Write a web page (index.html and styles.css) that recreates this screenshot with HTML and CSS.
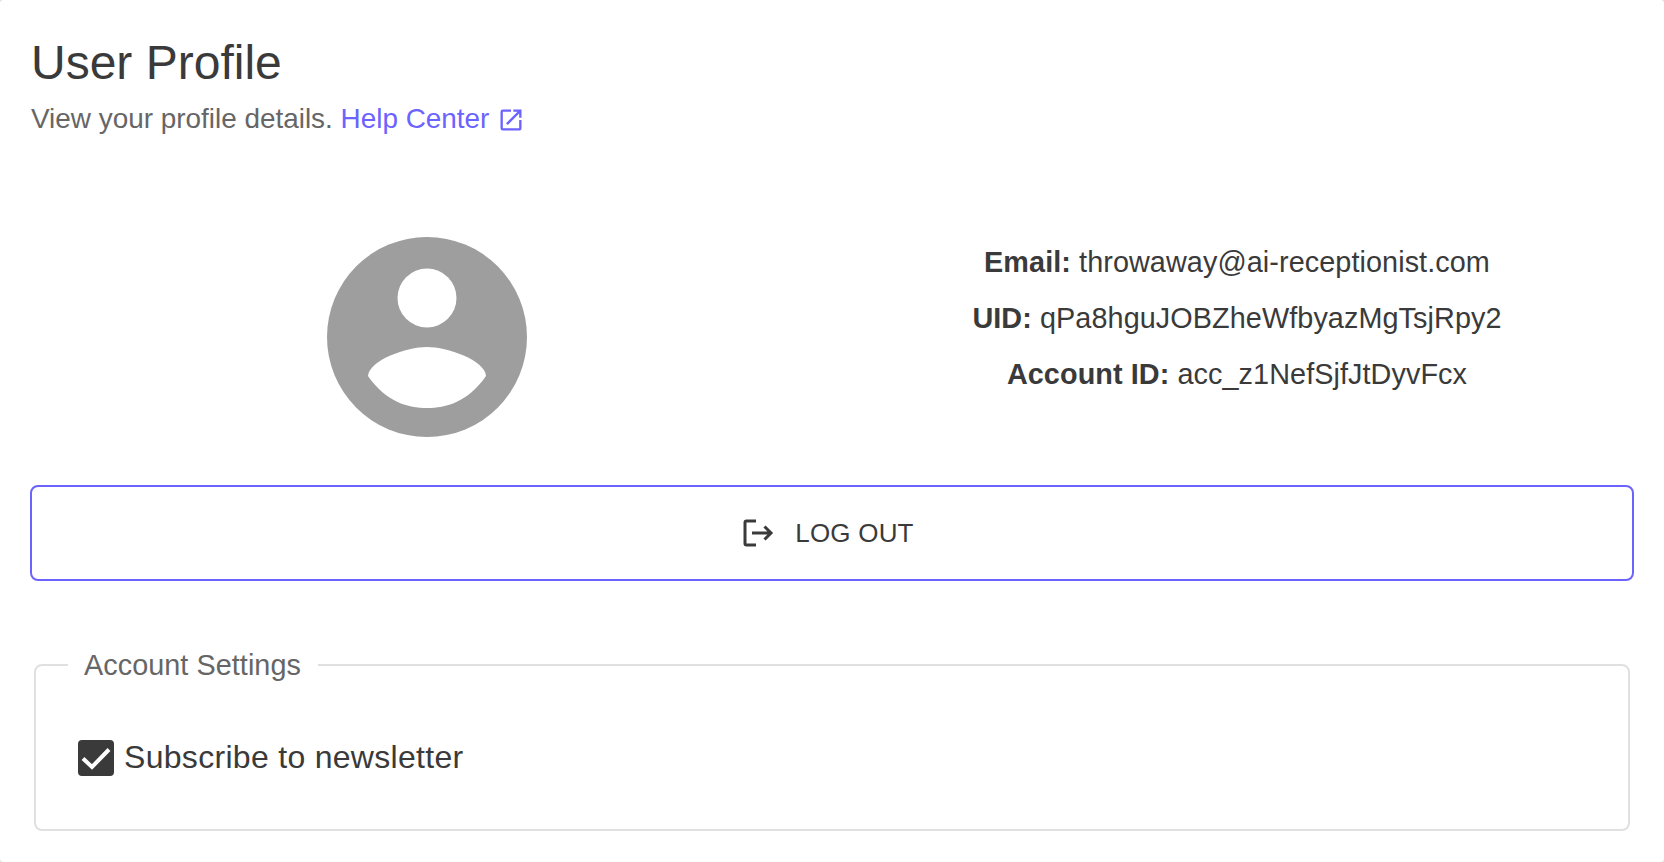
FILE: index.html
```html
<!DOCTYPE html>
<html lang="en">
<head>
    <meta charset="UTF-8">
    <meta name="viewport" content="width=device-width, initial-scale=1.0">
    <title>User Profile</title>
    <link rel="stylesheet" href="styles.css">
</head>
<body>
    <div class="container">
        <h1>User Profile</h1>
        <p class="subtitle">
            View your profile details.
            <a href="#" class="help-link">Help Center
                <svg class="external-icon" viewBox="0 0 24 24"><path d="M19 19H5V5h7V3H5a2 2 0 0 0-2 2v14a2 2 0 0 0 2 2h14c1.1 0 2-.9 2-2v-7h-2v7zM14 3v2h3.59l-9.83 9.83 1.41 1.41L19 6.41V10h2V3h-7z"/></svg>
            </a>
        </p>

        <div class="profile">
            <div class="avatar-col">
                <svg class="avatar" viewBox="0 0 200 200">
                    <circle cx="100" cy="100" r="100" fill="#9e9e9e"/>
                    <circle cx="100" cy="61" r="29.5" fill="#fff"/>
                    <path d="M100 110c-20 0-58 13-59 29 18 26 40 32 59 32s41-6 59-32c-1-16-39-29-59-29z" fill="#fff"/>
                </svg>
            </div>
            <div class="details">
                <p><strong>Email:</strong> throwaway@ai-receptionist.com</p>
                <p><strong>UID:</strong> qPa8hguJOBZheWfbyazMgTsjRpy2</p>
                <p><strong>Account ID:</strong> acc_z1NefSjfJtDyvFcx</p>
            </div>
        </div>

        <button class="logout">
            <svg class="logout-icon" viewBox="0 0 30 30"><path d="M13 3H3.500A1.500 1.500 0 0 0 2 4.500v21A1.500 1.500 0 0 0 3.500 27H13M9 15h19M21.500 8.500 28 15l-6.500 6.500" fill="none" stroke="currentColor" stroke-width="3"/></svg>
            LOG OUT
        </button>

        <fieldset class="settings">
            <legend>Account Settings</legend>
            <label class="check-row">
                <span class="checkbox">
                    <svg viewBox="0 0 36 36"><path d="M5 18.500 14 27 31 9.500" fill="none" stroke="#fff" stroke-width="4"/></svg>
                </span>
                Subscribe to newsletter
            </label>
        </fieldset>
    </div>
</body>
</html>
```

FILE: styles.css
```css
* {
    box-sizing: border-box;
}

body {
    margin: 0;
    font-family: 'Liberation Sans', Arial, sans-serif;
    background: #e4e4e4;
    color: #3a3a3a;
}

.container {
    padding: 35px 30px 0;
    height: 862px;
    overflow: hidden;
    background: #fff;
    border-radius: 4px;
}

h1 {
    margin: 0 0 0 1px;
    font-size: 48px;
    font-weight: 400;
    line-height: 56px;
}

.subtitle {
    margin: 12px 0 0 1px;
    font-size: 27.900px;
    line-height: 32px;
    color: #666;
}

.help-link {
    color: #6c63ff;
    text-decoration: none;
}

.external-icon {
    width: 28px;
    height: 28px;
    fill: #6c63ff;
    vertical-align: -6px;
}

.profile {
    display: grid;
    grid-template-columns: 1fr 1fr;
    gap: 16px;
    margin-top: 102px;
}

.avatar-col {
    display: flex;
    justify-content: center;
}

.avatar {
    display: block;
    width: 200px;
    height: 200px;
}

.details {
    text-align: center;
    font-size: 28.800px;
    line-height: 34px;
    letter-spacing: 0.08px;
    padding-top: 8px;
}

.details p {
    margin: 0 0 22px;
}

.logout {
    display: flex;
    align-items: center;
    justify-content: center;
    gap: 21px;
    width: 100%;
    height: 96px;
    margin-top: 48px;
    padding: 0 8px 0 0;
    background: #fff;
    border: 2px solid #6c63ff;
    border-radius: 8px;
    color: #3a3a3a;
    font-family: inherit;
    font-size: 26px;
    letter-spacing: 0.2px;
}

.logout-icon {
    width: 32px;
    height: 30px;
}

.settings {
    margin: 69px 4px 0;
    padding: 0;
    height: 181px;
    border: 2px solid #e0e0e0;
    border-radius: 8px;
}

.settings legend {
    margin-left: 32px;
    padding: 0 17px 0 16px;
    font-size: 28.800px;
    line-height: 30px;
    letter-spacing: 0.05px;
    color: #666;
}

.check-row {
    display: flex;
    align-items: center;
    gap: 10px;
    margin: 59px 0 0 42px;
    font-size: 32px;
    letter-spacing: 0.3px;
}

.checkbox {
    display: block;
    width: 36px;
    height: 36px;
    background: #3a3a3a;
    border-radius: 4px;
}

.checkbox svg {
    display: block;
}
```
